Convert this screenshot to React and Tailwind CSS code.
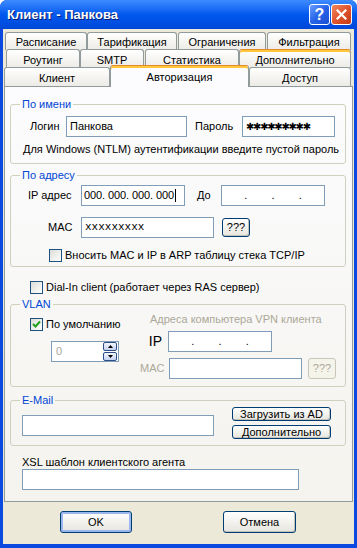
import React from 'react'

const Tab = ({ label, w, ml = 0, h, active = false, hot = false }) => (
  <div
    style={{ width: w, marginLeft: ml, height: h }}
    className={`flex shrink-0 items-center justify-center rounded-t-[3px] border-x border-t pt-[2px] ${
      active ? 'bg-[#FCFCFE]' : 'bg-linear-to-b from-white to-[#ECEBE6]'
    } ${
      active || hot
        ? 'border-x-[#919B9C] border-t-[#E68B2C] shadow-[inset_0_2px_0_#FFC73C]'
        : 'border-[#919B9C]'
    }`}
  >
    {label}
  </div>
)

const Input = ({ className = '', children, text = 'text-black' }) => (
  <div className={`flex h-[21px] shrink-0 items-center whitespace-nowrap border border-[#7F9DB9] bg-white px-[3px] ${text} ${className}`}>
    {children}
  </div>
)

const Checkbox = ({ checked = false }) => (
  <div className="flex h-[13px] w-[13px] shrink-0 items-center justify-center border border-[#1C5180] bg-linear-to-br from-[#DCDCD7] to-white">
    {checked && (
      <svg width="9" height="9" viewBox="0 0 9 9">
        <path d="M1 4 L3.5 6.5 L8 1.5" fill="none" stroke="#21A121" strokeWidth="2" />
      </svg>
    )}
  </div>
)

const Button = ({ className = '', children, focus = false, disabled = false }) => (
  <div
    className={`flex shrink-0 items-center justify-center rounded-[3px] border ${
      disabled
        ? 'border-[#C9C7BA] bg-[#F5F4EA] text-[#ACA899]'
        : 'border-[#003C74] bg-linear-to-b from-white to-[#E6E5DE] text-black'
    } ${focus ? 'shadow-[inset_0_0_0_2px_#9BB8EE]' : disabled ? '' : 'shadow-[inset_-1px_-1px_0_#C3C2B8]'} ${className}`}
  >
    {children}
  </div>
)

const Group = ({ title, className = '', children }) => (
  <fieldset className={`ml-[5px] w-[336px] rounded-[3px] border border-[#D0D0BF] ${className}`}>
    <legend className="ml-[9px] px-[2px] leading-[13px] text-[#0046D5]">{title}</legend>
    {children}
  </fieldset>
)

const SpinArrow = ({ up }) => (
  <div className="flex h-[9px] w-[14px] items-center justify-center rounded-[2px] border border-[#2E4E86] bg-linear-to-b from-[#F4F6FC] to-[#C6D3F0]">
    <svg width="5" height="3" viewBox="0 0 5 3">
      <path d={up ? 'M0 3 L2.5 0 L5 3Z' : 'M0 0 L2.5 3 L5 0Z'} fill="#000" />
    </svg>
  </div>
)

export default function App() {
  return (
    <div className="h-[548px] w-[357px] overflow-hidden rounded-t-[7px] bg-[#0A4AE0] font-['Liberation_Sans',Arial,sans-serif] text-[11px] leading-[13px] text-black">
      {/* Title bar */}
      <div className="flex h-[29px] items-center bg-linear-to-b from-[#3D8BFF] via-[#0058EE] to-[#0047D9] pl-[7px] pr-[5px]">
        <span className="text-[13px] font-bold text-white [text-shadow:1px_1px_0_#0A1E6C]">Клиент - Панкова</span>
        <div className="ml-auto flex gap-[1px]">
          <div className="flex h-[21px] w-[21px] items-center justify-center rounded-[3px] border border-white bg-linear-to-br from-[#6A9CFF] via-[#2663E8] to-[#1A4FD0] text-[16px] font-bold text-white">
            ?
          </div>
          <div className="flex h-[21px] w-[21px] items-center justify-center rounded-[3px] border border-white bg-linear-to-br from-[#F08860] via-[#E0532C] to-[#C23A14]">
            <svg width="11" height="11" viewBox="0 0 11 11">
              <path d="M1.5 1.5 L9.5 9.5 M9.5 1.5 L1.5 9.5" stroke="white" strokeWidth="2.2" strokeLinecap="square" />
            </svg>
          </div>
        </div>
      </div>

      {/* Body */}
      <div className="mx-[3px] h-[515px] bg-[#ECE9D8] pt-[3px]">
        {/* Tabs */}
        <div className="flex h-[17px] items-start pl-[2px]">
          <Tab label="Расписание" w={82} h={18} />
          <Tab label="Тарификация" w={90} h={18} />
          <Tab label="Ограничения" w={88} ml={1} h={18} />
          <Tab label="Фильтрация" w={84} ml={1} h={18} />
        </div>
        <div className="flex h-[18px] items-start pl-[3px]">
          <Tab label="Роутинг" w={74} h={19} />
          <Tab label="SMTP" w={64} h={19} />
          <Tab label="Статистика" w={94} ml={1} h={19} />
          <Tab label="Дополнительно" w={112} h={19} hot />
        </div>
        <div className="relative z-10 flex h-[19px] items-end pl-[1px]">
          <Tab label="Клиент" w={106} h={19} />
          <div className="-mb-[1px]">
            <Tab label="Авторизация" w={139} h={22} active />
          </div>
          <Tab label="Доступ" w={102} h={19} />
        </div>

        {/* Panel */}
        <div className="ml-[1px] h-[416px] w-[349px] border border-[#919B9C] bg-linear-to-b from-[#FCFCFE] to-[#F4F3EE] pt-[11px]">
          <Group title="По имени" className="pb-[7px]">
            <div className="mt-[5px] flex items-center pl-[19px]">
              <span className="w-[36px]">Логин</span>
              <Input className="w-[121px]">Панкова</Input>
              <span className="ml-[8px] w-[47px]">Пароль</span>
              <Input className="w-[93px] pl-[3px] font-['DejaVu_Sans',sans-serif] text-[10px] tracking-[-1.3px]">
                ✱✱✱✱✱✱✱✱✱
              </Input>
            </div>
            <div className="mt-[6px] pl-[12px]">Для Windows (NTLM) аутентификации введите пустой пароль</div>
          </Group>

          <Group title="По адресу" className="mt-[5px] pb-[4px]">
            <div className="mt-[3px] flex items-center pl-[17px]">
              <span className="w-[53px]">IP адрес</span>
              <Input className="w-[104px] border-[#3D6DB0] pl-[2px]">
                <span className="tracking-[-0.1px]">000. 000. 000. 000</span>
                <span className="ml-[1px] h-[13px] w-[1px] bg-black" />
              </Input>
              <span className="ml-[12px] w-[24px]">До</span>
              <Input className="w-[104px] justify-around px-[10px]">
                <span>.</span>
                <span>.</span>
                <span>.</span>
              </Input>
            </div>
            <div className="mt-[11px] flex items-center pl-[37px]">
              <span className="w-[33px]">MAC</span>
              <Input className="w-[133px] font-['Liberation_Mono',monospace] text-[11px]">xxxxxxxxx</Input>
              <Button className="ml-[8px] h-[19px] w-[28px]">???</Button>
            </div>
            <div className="mt-[11px] flex items-center gap-[3px] pl-[38px]">
              <Checkbox />
              <span>Вносить MAC и IP в ARP таблицу стека TCP/IP</span>
            </div>
          </Group>

          <div className="ml-[25px] mt-[14px] flex items-center gap-[3px]">
            <Checkbox />
            <span>Dial-In client (работает через RAS сервер)</span>
          </div>

          <Group title="VLAN" className="mt-[4px] pb-[7px]">
            <div className="flex">
              <div className="w-[129px] pl-[19px]">
                <div className="mt-[7px] flex items-center gap-[3px]">
                  <Checkbox checked />
                  <span>По умолчанию</span>
                </div>
                <div className="ml-[21px] mt-[10px] flex h-[21px] w-[68px] items-center border border-[#7F9DB9] bg-white pl-[4px] pr-[1px] text-[#ACA899]">
                  <span>0</span>
                  <div className="ml-auto flex flex-col gap-[1px]">
                    <SpinArrow up />
                    <SpinArrow />
                  </div>
                </div>
              </div>
              <div className="flex-1">
                <div className="ml-[10px] mt-[2px] text-[#ACA899]">Адреса компьютера VPN клиента</div>
                <div className="mt-[5px] flex items-center">
                  <span className="w-[22px] text-right text-[14px]">IP</span>
                  <Input className="ml-[6px] w-[104px] justify-around px-[10px]">
                    <span>.</span>
                    <span>.</span>
                    <span>.</span>
                  </Input>
                </div>
                <div className="mt-[6px] flex items-center">
                  <span className="w-[22px] text-right text-[#ACA899]">MAC</span>
                  <Input className="ml-[7px] w-[133px]" />
                  <Button disabled className="ml-[6px] h-[21px] w-[28px]">???</Button>
                </div>
              </div>
            </div>
          </Group>

          <Group title="E-Mail" className="mt-[7px] pb-[6px]">
            <div className="flex items-start pl-[11px]">
              <Input className="mt-[8px] w-[192px]" />
              <div className="ml-[18px] flex flex-col gap-[4px]">
                <Button className="h-[14px] w-[99px]">Загрузить из AD</Button>
                <Button className="h-[14px] w-[99px]">Дополнительно</Button>
              </div>
            </div>
          </Group>

          <div className="ml-[17px] mt-[10px]">XSL шаблон клиентского агента</div>
          <Input className="ml-[17px] w-[277px]" />
        </div>

        {/* Footer buttons */}
        <div className="mt-[9px] flex">
          <Button focus className="ml-[57px] h-[22px] w-[72px]">OK</Button>
          <Button className="ml-[91px] h-[22px] w-[73px]">Отмена</Button>
        </div>
      </div>
    </div>
  )
}
